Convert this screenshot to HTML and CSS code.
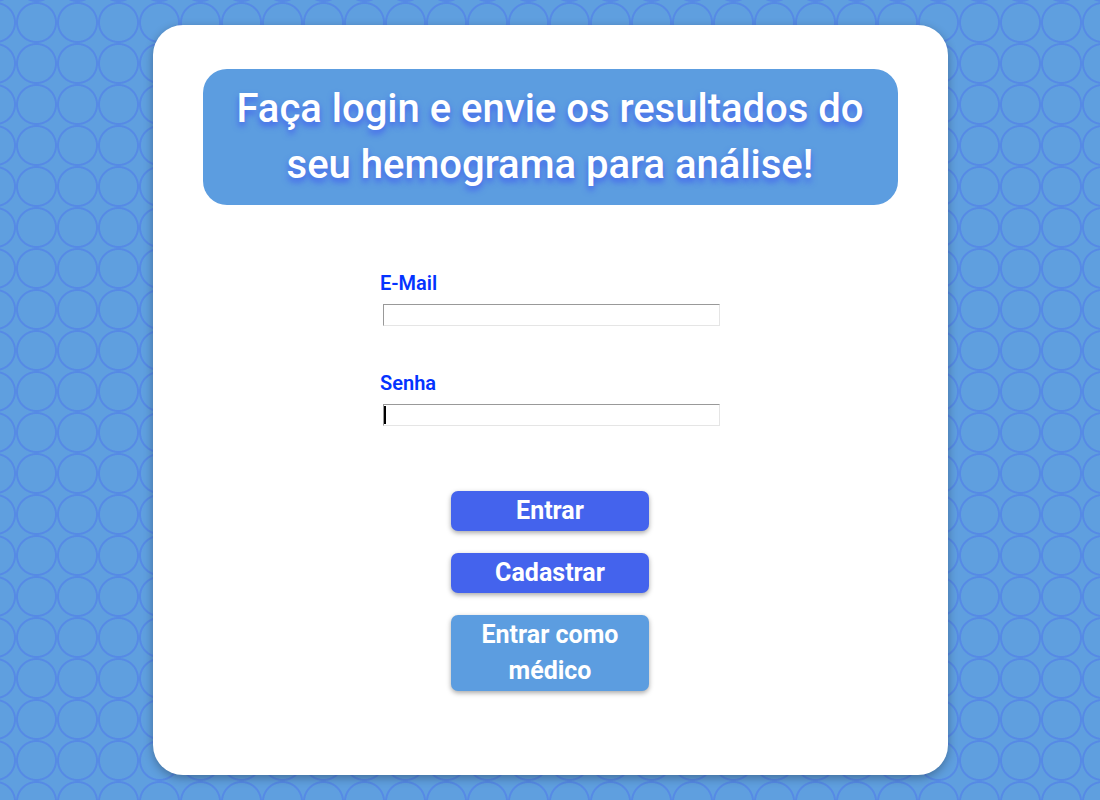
FILE: index.html
```html
<!DOCTYPE html>
<html lang="pt-BR">
<head>
  <meta charset="utf-8">
  <meta name="viewport" content="width=device-width, initial-scale=1">
  <title>Login</title>
  <link rel="stylesheet" href="styles.css">
</head>
<body>
  <main class="card">
    <h1 class="banner">Faça login e envie os resultados do seu hemograma para análise!</h1>
    <form class="login">
      <div class="field">
        <label class="label" for="email">E-Mail</label>
        <input class="input" type="email" id="email" name="email">
      </div>
      <div class="field">
        <label class="label" for="senha">Senha</label>
        <input class="input input-active" type="password" id="senha" name="senha">
      </div>
      <div class="actions">
        <button class="button" type="submit">Entrar</button>
        <button class="button" type="button">Cadastrar</button>
        <button class="button button-light" type="button">Entrar como médico</button>
      </div>
    </form>
  </main>
</body>
</html>
```
FILE: styles.css
```css
* {
  box-sizing: border-box;
}

body {
  margin: 0;
  min-height: 100vh;
  padding: 25px;
  display: flex;
  justify-content: center;
  font-family: Bahnschrift, Roboto, "Liberation Sans", sans-serif;
  background-color: #5f9fdf;
  background-image: radial-gradient(circle, transparent 18px, #568ae5 19px, #568ae5 20px, transparent 21px);
  background-size: 41px 41px;
  background-position: 16px 2px;
}

.card {
  width: 100%;
  max-width: 795px;
  padding: 44px 50px;
  border-radius: 30px;
  background: #fff;
  box-shadow: 0 3px 10px rgba(0, 0, 0, 0.3);
}

.banner {
  margin: 0;
  padding: 12px 24px;
  border-radius: 24px;
  background: #5c9de0;
  color: #fff;
  font-size: 40px;
  font-weight: 500;
  line-height: 56px;
  text-align: center;
  text-shadow: 0 4px 6px #4361ee;
}

.login {
  max-width: 340px;
  margin: 66px auto 0;
}

.field {
  display: flex;
  flex-direction: column;
  gap: 9px;
  margin-bottom: 45px;
}

.label {
  color: #0433ff;
  font-size: 20px;
  font-weight: 600;
  line-height: 24px;
}

.input {
  height: 22px;
  margin-left: 3px;
  padding: 0 2px;
  border: 1px solid;
  border-color: #999 #e5e5e5 #e5e5e5 #999;
  background: #fff;
  font: inherit;
  outline: none;
}

.input-active {
  background: linear-gradient(#000, #000) 0 1px / 2px 18px no-repeat #fff;
}

.actions {
  display: flex;
  flex-direction: column;
  align-items: center;
  gap: 22px;
  padding-top: 20px;
}

.button {
  width: 198px;
  padding: 2px 20px;
  border: 0;
  border-radius: 7px;
  background: #4463ed;
  color: #fff;
  font-family: inherit;
  font-size: 25px;
  font-weight: 700;
  line-height: 36px;
  box-shadow: 0 2px 5px rgba(0, 0, 0, 0.35);
  cursor: pointer;
}

.button-light {
  background: #5c9de0;
}
```
